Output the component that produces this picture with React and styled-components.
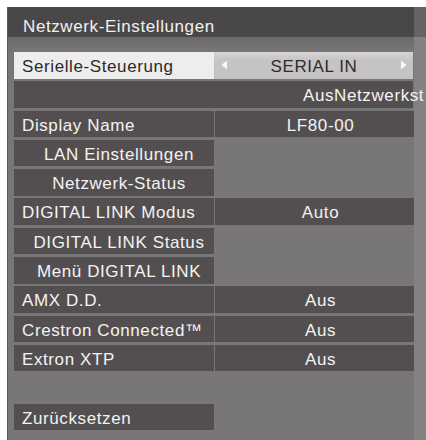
import React from "react";
import styled, { createGlobalStyle } from "styled-components";

const GlobalStyle = createGlobalStyle`
  html, body {
    margin: 0;
    padding: 0;
    background: #ffffff;
    overflow: hidden;
  }
  body {
    font-family: "Liberation Sans", Arial, sans-serif;
  }
`;

const Page = styled.div`
  width: 426px;
  height: 440px;
  box-sizing: border-box;
  padding: 7px 0 0 7px;
  overflow: hidden;
`;

const Panel = styled.div`
  display: flex;
  height: 433px;
  background: #797677;
  border-left: 1px solid #5c595a;
  box-sizing: border-box;
`;

const Main = styled.div`
  width: 406px;
  display: flex;
  flex-direction: column;
  position: relative;
  z-index: 1;
`;

const Side = styled.div`
  flex: 1;
  background: linear-gradient(to bottom, #666364 0 30px, #848182 30px);
`;

const Title = styled.div`
  height: 30px;
  box-sizing: border-box;
  padding: 10px 0 0 15px;
  background: #4a4748;
  color: #f1f1f1;
  font-size: 17px;
  line-height: 20px;
  letter-spacing: 0.6px;
  white-space: nowrap;
`;

const TitleFoot = styled.div`
  height: 15px;
  background: linear-gradient(to bottom, #6c696a 0, #737071 60%, #797677 100%);
`;

const Rows = styled.div`
  display: flex;
  flex-direction: column;
  gap: 2.8px;
  padding-left: 6px;
`;

const Row = styled.div`
  display: flex;
  gap: ${(p) => (p.$joined ? 0 : 1)}px;
  height: 26.5px;
`;

const Blank = styled.div`
  height: 26.5px;
`;

const tones = {
  dark: { bg: "#534f50", fg: "#f3f3f3" },
  bright: { bg: "#ededed", fg: "#2a2a2a" },
};

const Label = styled.div`
  width: 200px;
  box-sizing: border-box;
  padding: 3px ${(p) => (p.$center ? "0" : "8px")} 0
    ${(p) => (p.$center ? "10px" : "8px")};
  background: ${(p) => tones[p.$tone || "dark"].bg};
  color: ${(p) => tones[p.$tone || "dark"].fg};
  font-size: 17px;
  line-height: 23.5px;
  letter-spacing: 0.6px;
  text-align: ${(p) => (p.$center ? "center" : "left")};
  white-space: nowrap;
`;

const Value = styled.div`
  width: 199px;
  box-sizing: border-box;
  display: flex;
  align-items: center;
  justify-content: ${(p) => (p.$start ? "flex-start" : "center")};
  padding: 3px 0 0 ${(p) => p.$pad || 12}px;
  background: ${tones.dark.bg};
  color: ${tones.dark.fg};
  font-size: 17px;
  line-height: 23.5px;
  letter-spacing: 0.6px;
  white-space: nowrap;
  overflow: visible;
`;

const Selector = styled.div`
  width: 199px;
  box-sizing: border-box;
  display: flex;
  align-items: center;
  justify-content: space-between;
  padding: 0 6px 0 7px;
  background: linear-gradient(to bottom, #d6d4d5 0, #c6c4c5 30%, #c3c1c2 100%);
  color: #2e2e2e;
  font-size: 17px;
  letter-spacing: 0.6px;
`;

const SelectorText = styled.span`
  padding-top: 3px;
  line-height: 23.5px;
  white-space: nowrap;
`;

const Arrow = ({ dir }) => (
  <svg width="7" height="10" viewBox="0 0 7 10" style={{ filter: "blur(0.4px)" }}>
    {dir === "left" ? (
      <polygon points="6,0.5 6,9.5 0.5,5" fill="#ffffff" opacity="0.9" />
    ) : (
      <polygon points="1,0.5 1,9.5 6.5,5" fill="#ffffff" opacity="0.9" />
    )}
  </svg>
);

const rows = [
  { label: "Display Name", value: "LF80-00" },
  { label: "LAN Einstellungen", center: true },
  { label: "Netzwerk-Status", center: true },
  { label: "DIGITAL LINK Modus", value: "Auto" },
  { label: "DIGITAL LINK Status", center: true },
  { label: "Menü DIGITAL LINK", center: true },
  { label: "AMX D.D.", value: "Aus" },
  { label: "Crestron Connected™", value: "Aus" },
  { label: "Extron XTP", value: "Aus" },
];

export default function App() {
  return (
    <>
      <GlobalStyle />
      <Page>
        <Panel>
          <Main>
            <Title>Netzwerk-Einstellungen</Title>
            <TitleFoot />
            <Rows>
              <Row $joined>
                <Label $tone="bright">Serielle-Steuerung</Label>
                <Selector>
                  <Arrow dir="left" />
                  <SelectorText>SERIAL IN</SelectorText>
                  <Arrow dir="right" />
                </Selector>
              </Row>
              <Row $joined>
                <Label />
                <Value $start $pad={89}>AusNetzwerkst</Value>
              </Row>
              {rows.map((r) => (
                <Row key={r.label}>
                  <Label $center={r.center}>{r.label}</Label>
                  {r.value && <Value>{r.value}</Value>}
                </Row>
              ))}
              <Blank />
              <Row>
                <Label>Zurücksetzen</Label>
              </Row>
            </Rows>
          </Main>
          <Side />
        </Panel>
      </Page>
    </>
  );
}
